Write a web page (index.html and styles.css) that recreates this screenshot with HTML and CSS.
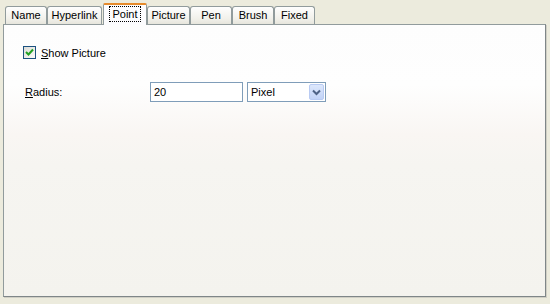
FILE: index.html
```html
<!DOCTYPE html>
<html>
<head>
<meta charset="utf-8">
<link rel="stylesheet" href="styles.css">
</head>
<body>
<div class="dialog">
  <div class="tabs">
    <div class="tab tab-name">Name</div>
    <div class="tab tab-hyperlink">Hyperlink</div>
    <div class="tab active"><span class="focus">Point</span></div>
    <div class="tab tab-picture">Picture</div>
    <div class="tab tab-pen">Pen</div>
    <div class="tab tab-brush">Brush</div>
    <div class="tab tab-fixed">Fixed</div>
  </div>
  <div class="panel">
    <div class="check-row">
      <span class="checkbox">
        <svg width="9" height="9" viewBox="0 0 9 9"><path d="M1 4 L3.5 6.5 L8 1.5" fill="none" stroke="#21a121" stroke-width="2"/></svg>
      </span>
      <span class="label"><u>S</u>how Picture</span>
    </div>
    <div class="field-row">
      <span class="field-label"><u>R</u>adius:</span>
      <div class="textbox">20</div>
      <div class="select">
        <span class="select-text">Pixel</span>
        <span class="select-btn">
          <svg width="9" height="7" viewBox="0 0 9 7"><path d="M1 1.5 L4.5 5 L8 1.5" fill="none" stroke="#4d6185" stroke-width="2"/></svg>
        </span>
      </div>
    </div>
  </div>
</div>
</body>
</html>
```
FILE: styles.css
```css
html, body {
  margin: 0;
  padding: 0;
}
body {
  width: 550px;
  height: 304px;
  background: #ecebdd;
  font-family: "Liberation Sans", Arial, sans-serif;
  font-size: 11px;
  color: #000;
  overflow: hidden;
}
.dialog {
  padding: 2px 4px 0 3px;
}
.tabs {
  display: flex;
  align-items: flex-end;
  height: 22px;
  padding-left: 2px;
  position: relative;
  z-index: 2;
}
.tab {
  box-sizing: border-box;
  height: 18px;
  line-height: 17px;
  border: 1px solid #919b9c;
  border-bottom: none;
  border-radius: 3px 3px 0 0;
  background: linear-gradient(#fefefe, #f1f0ea 70%, #e6e5dc);
  font-size: 11px;
  text-align: center;
}
.tab-name { width: 42px; }
.tab-hyperlink { width: 55px; }
.tab-picture { width: 43px; }
.tab-pen { width: 42px; }
.tab-brush { width: 42px; }
.tab-fixed { width: 41px; }
.tab.active {
  height: 22px;
  width: 44px;
  margin: 0 0 -1px 1px;
  background: #fcfcfe;
  border-top: 2px solid #e68b2c;
  border-radius: 2px 2px 0 0;
  line-height: 18px;
}
.focus {
  display: inline-block;
  border: 1px dotted #000;
  line-height: 14px;
  padding: 0 2px;
  margin-top: 1px;
}
.panel {
  height: 271px;
  border: 1px solid #919b9c;
  border-right-color: #7f8688;
  border-bottom-color: #7f8688;
  box-shadow: 1px 1px 0 #d0cfc5;
  background: linear-gradient(#fdfdfd 0px, #fefefe 60px, #f9f6f3 110px, #f6f5f1 140px, #f4f3ee 100%);
  padding: 0;
}
.check-row {
  display: flex;
  align-items: center;
  margin: 21px 0 0 19px;
  height: 13px;
}
.checkbox {
  width: 11px;
  height: 11px;
  border: 1px solid #1c5180;
  background: linear-gradient(135deg, #dcdcd7, #fbfbf9);
  display: flex;
  align-items: center;
  justify-content: center;
}
.label {
  margin-left: 5px;
}
.field-row {
  display: flex;
  align-items: center;
  margin: 23px 0 0 21px;
  height: 20px;
}
.field-label {
  width: 125px;
}
.textbox {
  width: 88px;
  height: 18px;
  border: 1px solid #7f9db9;
  background: #fff;
  line-height: 18px;
  padding-left: 3px;
  box-sizing: content-box;
}
.select {
  margin-left: 4px;
  width: 77px;
  height: 18px;
  border: 1px solid #7f9db9;
  background: #fff;
  display: flex;
  align-items: center;
}
.select-text {
  flex: 1;
  padding-left: 3px;
  line-height: 18px;
}
.select-btn {
  width: 15px;
  height: 16px;
  margin-right: 1px;
  border-radius: 2px;
  background: linear-gradient(#dde8fc, #c2d3f7);
  border: 1px solid #b9cbf3;
  box-sizing: border-box;
  display: flex;
  align-items: center;
  justify-content: center;
}
```
